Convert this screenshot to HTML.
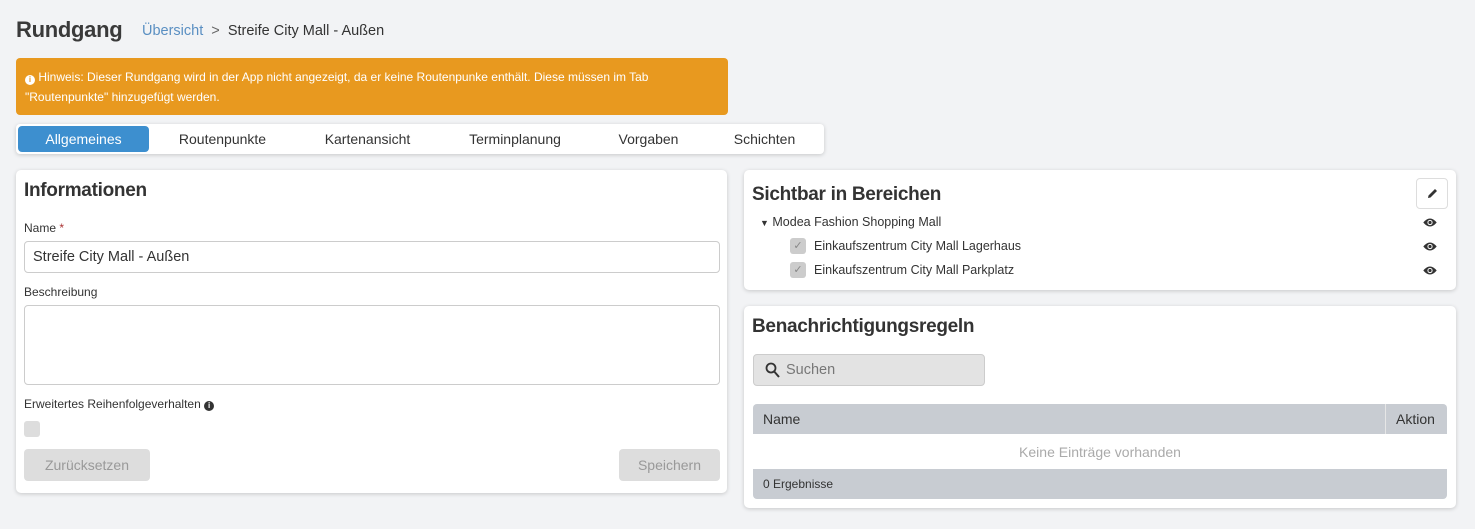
<!DOCTYPE html>
<html><head><meta charset="utf-8"><style>
*{box-sizing:border-box;margin:0;padding:0}
body{width:1475px;height:529px;background:#f2f3f5;font-family:"Liberation Sans",sans-serif;color:#333;position:relative;overflow:hidden}
.a{position:absolute}
.card{position:absolute;background:#fff;border-radius:5px;box-shadow:0 1px 4px rgba(0,0,0,.18)}
h2{position:absolute;font-size:19px;font-weight:bold;color:#333;letter-spacing:-.3px}
.lbl{position:absolute;font-size:12px;color:#333}
.inp{position:absolute;border:1px solid #ccc;border-radius:4px;background:#fff}
.btn{position:absolute;background:#ddd;border-radius:4px;color:#999;font-size:14px;text-align:center;line-height:32px}
.tab{position:absolute;top:126px;height:26px;line-height:26px;font-size:14px;color:#333;text-align:center}
.eye{position:absolute;left:1423px}
</style></head><body>
<div class="a" style="left:16px;top:17px;font-size:22px;font-weight:bold;color:#3a3a3a;letter-spacing:-.3px">Rundgang</div>
<div class="a" style="left:142px;top:23px;font-size:14.5px;color:#5a8fc2">Übersicht <span style="color:#666">&nbsp;&gt;&nbsp;</span> <span style="color:#333">Streife City Mall - Außen</span></div>
<div class="a" style="left:16px;top:58px;width:712px;height:57px;background:#e8991f;border-radius:4px;color:#fff;font-size:12px;line-height:20px;padding:9px 10px 0 9px"><span style="display:inline-block;width:10px;height:10px;border-radius:50%;background:#fff;color:#e8991f;font-size:8px;line-height:10px;text-align:center;font-weight:bold;vertical-align:-1px">i</span> Hinweis: Dieser Rundgang wird in der App nicht angezeigt, da er keine Routenpunke enthält. Diese müssen im Tab "Routenpunkte" hinzugefügt werden.</div>
<div class="card" style="left:16px;top:124px;width:808px;height:30px;border-radius:4px"></div>
<div class="tab" style="left:18px;width:131px;background:#3d8fcf;color:#fff;border-radius:4px">Allgemeines</div>
<div class="tab" style="left:160px;width:125px">Routenpunkte</div>
<div class="tab" style="left:305px;width:125px">Kartenansicht</div>
<div class="tab" style="left:450px;width:130px">Terminplanung</div>
<div class="tab" style="left:600px;width:97px">Vorgaben</div>
<div class="tab" style="left:717px;width:95px">Schichten</div>

<div class="card" style="left:16px;top:170px;width:711px;height:323px"></div>
<h2 style="left:24px;top:180px">Informationen</h2>
<div class="lbl" style="left:24px;top:221px">Name <span style="color:#a33">*</span></div>
<div class="inp" style="left:24px;top:241px;width:696px;height:32px;font-size:14.5px;line-height:31px;padding-left:8px">Streife City Mall - Außen</div>
<div class="lbl" style="left:24px;top:285px">Beschreibung</div>
<div class="inp" style="left:24px;top:305px;width:696px;height:80px"></div>
<div class="lbl" style="left:24px;top:397px">Erweitertes Reihenfolgeverhalten <span style="display:inline-block;width:10px;height:10px;border-radius:50%;background:#333;color:#fff;font-size:8px;line-height:10px;text-align:center;font-weight:bold">i</span></div>
<div class="a" style="left:24px;top:421px;width:16px;height:16px;background:#ddd;border-radius:3px"></div>
<div class="btn" style="left:24px;top:449px;width:126px">Zurücksetzen</div>
<div class="btn" style="left:619px;top:449px;width:101px">Speichern</div>

<div class="card" style="left:744px;top:170px;width:712px;height:120px"></div>
<h2 style="left:752px;top:184px">Sichtbar in Bereichen</h2>
<div class="a" style="left:1416px;top:178px;width:32px;height:31px;border:1px solid #ddd;border-radius:4px;background:#fff"><svg width="30" height="29" viewBox="0 0 30 29"><path d="M11 19 L11.5 16.5 L18 10 L20 12 L13.5 18.5 Z" fill="#333"/></svg></div>
<div class="a" style="left:760px;top:215px;font-size:12.5px;color:#333"><span style="font-size:9px">&#9660;</span> Modea Fashion Shopping Mall</div>
<div class="a" style="left:790px;top:238px;width:16px;height:16px;background:#ccc;border-radius:3px;color:#888;font-size:11px;text-align:center;line-height:16px">&#10003;</div>
<div class="a" style="left:814px;top:239px;font-size:12.5px">Einkaufszentrum City Mall Lagerhaus</div>
<div class="a" style="left:790px;top:262px;width:16px;height:16px;background:#ccc;border-radius:3px;color:#888;font-size:11px;text-align:center;line-height:16px">&#10003;</div>
<div class="a" style="left:814px;top:263px;font-size:12.5px">Einkaufszentrum City Mall Parkplatz</div>
<svg class="eye" style="top:217px" width="14" height="11" viewBox="0 0 14 11"><path d="M0.3 5.5 Q7 -2.5 13.7 5.5 Q7 13.5 0.3 5.5Z" fill="#333"/><circle cx="7" cy="5.5" r="2.6" fill="#fff"/><circle cx="7" cy="5.5" r="1.6" fill="#333"/></svg>
<svg class="eye" style="top:241px" width="14" height="11" viewBox="0 0 14 11"><path d="M0.3 5.5 Q7 -2.5 13.7 5.5 Q7 13.5 0.3 5.5Z" fill="#333"/><circle cx="7" cy="5.5" r="2.6" fill="#fff"/><circle cx="7" cy="5.5" r="1.6" fill="#333"/></svg>
<svg class="eye" style="top:265px" width="14" height="11" viewBox="0 0 14 11"><path d="M0.3 5.5 Q7 -2.5 13.7 5.5 Q7 13.5 0.3 5.5Z" fill="#333"/><circle cx="7" cy="5.5" r="2.6" fill="#fff"/><circle cx="7" cy="5.5" r="1.6" fill="#333"/></svg>

<div class="card" style="left:744px;top:306px;width:712px;height:202px"></div>
<h2 style="left:752px;top:316px">Benachrichtigungsregeln</h2>
<div class="a" style="left:753px;top:354px;width:232px;height:32px;background:#e3e3e3;border:1px solid #ccc;border-radius:4px;font-size:14.5px;color:#777;line-height:31px;padding-left:32px">Suchen
<svg class="a" style="left:11px;top:7px" width="16" height="17" viewBox="0 0 16 17"><circle cx="6" cy="6" r="4.5" fill="none" stroke="#333" stroke-width="1.8"/><path d="M9.2 9.5 L14 15" stroke="#333" stroke-width="2"/></svg></div>
<div class="a" style="left:753px;top:404px;width:694px;height:95px;border-radius:4px;overflow:hidden;background:#fff">
<div class="a" style="left:0;top:0;width:694px;height:30px;background:#c8ccd2"></div>
<div class="a" style="left:632px;top:0;width:1px;height:30px;background:#e6e6e6"></div>
<div class="a" style="left:10px;top:7px;font-size:14px;color:#333">Name</div>
<div class="a" style="left:643px;top:7px;font-size:14px;color:#333">Aktion</div>
<div class="a" style="left:0;top:40px;width:694px;text-align:center;font-size:14px;color:#aaa">Keine Einträge vorhanden</div>
<div class="a" style="left:0;top:65px;width:694px;height:30px;background:#c8ccd2;font-size:12px;padding:8px 10px">0 Ergebnisse</div>
</div>
</body></html>
